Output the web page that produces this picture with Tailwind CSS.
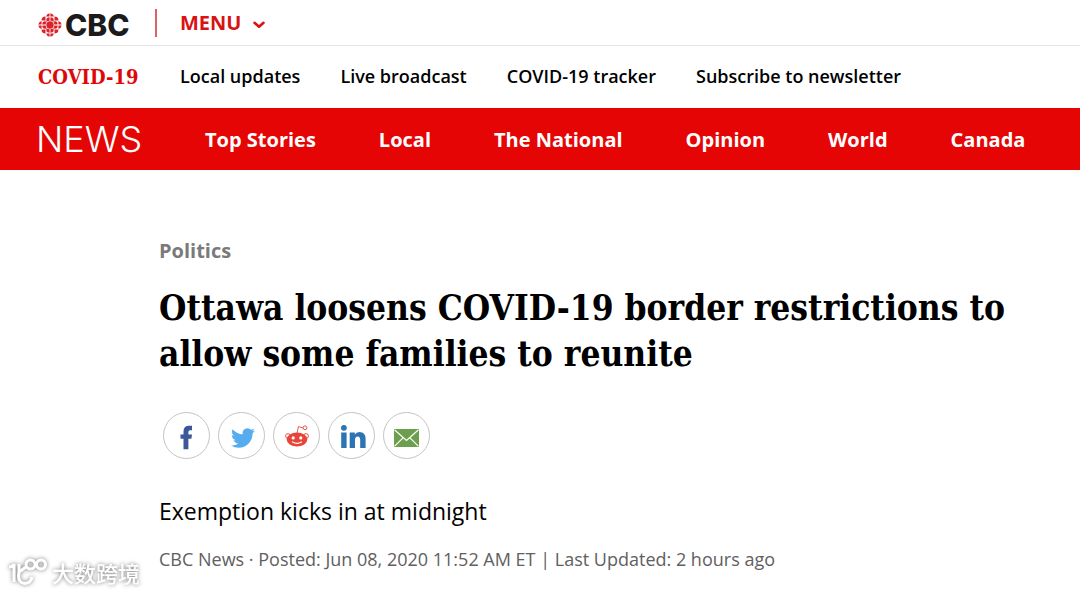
<!DOCTYPE html>
<html lang="en">
<head>
<meta charset="utf-8">
<meta name="viewport" content="width=device-width, initial-scale=1">
<title>Ottawa loosens COVID-19 border restrictions | CBC News</title>
<script src="https://cdn.jsdelivr.net/npm/@tailwindcss/browser@4"></script>
</head>
<body class="relative min-h-screen overflow-x-hidden bg-white font-['Open_Sans','Noto_Sans',sans-serif] text-black">
<header>
  <div class="flex h-[46px] items-center border-b border-[#e6e6e6] pl-[38px]">
    <a href="#" class="flex w-[117px] items-center gap-[3px] pt-1" aria-label="CBC home">
      <svg class="size-6 shrink-0" viewBox="0 0 24 24" fill="#d8232a" aria-hidden="true">
        <circle cx="12" cy="12" r="3.7"/>
        <path d="M8.3 7Q8.3 4.3 11.6 4.3V7.7Q9.8 7.8 8.6 8.8ZM15.7 7Q15.7 4.3 12.4 4.3V7.7Q14.2 7.8 15.4 8.8Z"/>
        <path d="M8.3 17Q8.3 19.7 11.6 19.7V16.3Q9.8 16.2 8.6 15.2ZM15.7 17Q15.7 19.7 12.4 19.7V16.3Q14.2 16.2 15.4 15.2Z"/>
        <path d="M7 8.3Q4.3 8.3 4.3 11.6H7.7Q7.8 9.8 8.8 8.6ZM17 8.3Q19.7 8.3 19.7 11.6H16.3Q16.2 9.8 15.2 8.6Z"/>
        <path d="M7 15.7Q4.3 15.7 4.3 12.4H7.7Q7.8 14.2 8.8 15.4ZM17 15.7Q19.7 15.7 19.7 12.4H16.3Q16.2 14.2 15.2 15.4Z"/>
        <path d="M11.6.3V3.6H8Q8.8.8 11.6.3ZM12.4.3V3.6H16Q15.2.8 12.4.3ZM11.6 23.7V20.4H8Q8.8 23.2 11.6 23.7ZM12.4 23.7V20.4H16Q15.2 23.2 12.4 23.7Z"/>
        <path d="M.3 11.6H3.6V8Q.8 8.8.3 11.6ZM.3 12.4H3.6V16Q.8 15.2.3 12.4ZM23.7 11.6H20.4V8Q23.2 8.8 23.7 11.6ZM23.7 12.4H20.4V16Q23.2 15.2 23.7 12.4Z"/>
        <path d="M3.5 7.5Q3.5 3.5 7.5 3.5V7.5ZM20.5 7.5Q20.5 3.5 16.5 3.5V7.5ZM3.5 16.5Q3.5 20.5 7.5 20.5V16.5ZM20.5 16.5Q20.5 20.5 16.5 20.5V16.5Z"/>
      </svg>
      <span class="font-[Inter,sans-serif] text-[30px] leading-8 font-extrabold text-[#1c1a1b]">CBC</span>
    </a>
    <button type="button" class="flex h-7 items-center gap-3 border-l-2 border-[#d96466] pl-[23px] text-xl font-bold text-[#d91313]">
      MENU
      <svg class="mt-1 h-2 w-3" viewBox="0 0 12 8" fill="none" stroke="currentColor" stroke-width="2.6" stroke-linecap="round" stroke-linejoin="round" aria-hidden="true"><path d="M1.5 1.8L6 5.8L10.5 1.8"/></svg>
    </button>
  </div>
  <nav class="flex h-[62px] items-center pl-[38px]" aria-label="COVID-19">
    <a href="#" class="w-[142px] font-['DejaVu_Serif_Condensed','DejaVu_Serif',serif] text-xl font-bold text-[#df0808]">COVID-19</a>
    <div class="flex gap-10 pb-0.5 text-lg font-semibold whitespace-nowrap">
      <a href="#">Local updates</a>
      <a href="#">Live broadcast</a>
      <a href="#">COVID-19 tracker</a>
      <a href="#">Subscribe to newsletter</a>
    </div>
  </nav>
  <nav class="flex h-[62px] items-center bg-[#e60505] pl-9 text-white" aria-label="News">
    <a href="#" class="w-[169px] font-[Inter,sans-serif] text-4xl font-light">NEWS</a>
    <div class="flex gap-[63px] pt-px text-xl font-bold whitespace-nowrap">
      <a href="#">Top Stories</a>
      <a href="#">Local</a>
      <a href="#">The National</a>
      <a href="#">Opinion</a>
      <a href="#">World</a>
      <a href="#">Canada</a>
    </div>
  </nav>
</header>
<main class="pt-[67px] pr-12 pl-[159px]">
  <a href="#" class="block text-xl leading-7 font-bold text-[#7a7a7a]">Politics</a>
  <h1 class="mt-5 font-['DejaVu_Serif_Condensed','DejaVu_Serif',serif] text-[35px] leading-[46px] font-bold">Ottawa loosens COVID-19 border restrictions to<br>allow some families to reunite</h1>
  <div class="mt-[35px] ml-1 flex gap-2">
    <a href="#" aria-label="Share on Facebook" class="flex size-[47px] items-center justify-center rounded-full border border-[#c4c4c4]">
      <svg class="size-7" viewBox="0 0 28 28" fill="#3b5998" aria-hidden="true"><path d="M10.5 27.3V16.8H7.5V12.4H10.5V9.4Q10.5 3.7 16 3.7H19V8.2H17.2Q15.4 8.2 15.4 10V12.4H19L18.4 16.8H15.4V27.3Z"/></svg>
    </a>
    <a href="#" aria-label="Share on Twitter" class="flex size-[47px] items-center justify-center rounded-full border border-[#c4c4c4]">
      <svg class="mt-1 ml-0.5 size-6" viewBox="0 0 24 24" fill="#55acee" aria-hidden="true"><path d="M23.95 4.57a10 10 0 0 1-2.82.77 4.96 4.96 0 0 0 2.16-2.72c-.95.55-2 .95-3.13 1.18a4.92 4.92 0 0 0-8.38 4.48C7.69 8.1 4.07 6.13 1.64 3.16a4.82 4.82 0 0 0-.67 2.48c0 1.71.87 3.21 2.19 4.1a4.9 4.9 0 0 1-2.23-.62v.06a4.92 4.92 0 0 0 3.95 4.83 5 5 0 0 1-2.21.08 4.94 4.94 0 0 0 4.6 3.42A9.87 9.87 0 0 1 0 19.54a13.99 13.99 0 0 0 7.56 2.21c9.05 0 14-7.5 14-13.98 0-.21 0-.42-.02-.63a9.94 9.94 0 0 0 2.46-2.55z"/></svg>
    </a>
    <a href="#" aria-label="Share on Reddit" class="flex size-[47px] items-center justify-center rounded-full border border-[#c4c4c4]">
      <svg class="size-7" viewBox="0 0 28 28" aria-hidden="true">
        <g fill="none" stroke="#e8453a" stroke-width=".9"><path d="M14 11L15.5 4.5L20 6"/><circle cx="22" cy="5.8" r="1.9"/><circle cx="5" cy="14" r="2.4"/><circle cx="23" cy="14" r="2.4"/></g>
        <ellipse cx="14" cy="17.5" rx="10.3" ry="7" fill="#e8453a"/>
        <circle cx="10.2" cy="15.9" r="1.6" fill="#fff"/><circle cx="17.8" cy="15.9" r="1.6" fill="#fff"/>
        <path d="M9.5 20Q14 22.6 18.5 20" fill="none" stroke="#fff" stroke-width="1.2" stroke-linecap="round"/>
      </svg>
    </a>
    <a href="#" aria-label="Share on LinkedIn" class="flex size-[47px] items-center justify-center rounded-full border border-[#c4c4c4]">
      <svg class="mt-0.5 ml-0.5 size-7" viewBox="0 0 28 28" fill="#2c74b3" aria-hidden="true"><circle cx="4.9" cy="4.8" r="2.9"/><path d="M2.2 9.5H7.6V25H2.2ZM10.7 9.5H15.8V11.6Q17.4 9.1 20.4 9.1Q26.6 9.1 26.6 16V25H21.2V17.1Q21.2 13.6 18.8 13.6Q16 13.6 16 17.2V25H10.7Z"/></svg>
    </a>
    <a href="#" aria-label="Share by email" class="flex size-[47px] items-center justify-center rounded-full border border-[#c4c4c4]">
      <svg class="mt-1 h-[18px] w-[25px]" viewBox="0 0 25 18" aria-hidden="true"><rect width="25" height="18" rx="1" fill="#6b9f4d"/><path d="M.7 1L12.5 11.5L24.3 1M.7 17.2L9 8.8M24.3 17.2L16 8.8" fill="none" stroke="#fff" stroke-width="1.2"/></svg>
    </a>
  </div>
  <p class="mt-9 text-[23px] leading-8">Exemption kicks in at midnight</p>
  <p class="mt-5 text-lg leading-6 text-[#606060]">CBC News · Posted: Jun 08, 2020 11:52 AM ET | Last Updated: 2 hours ago</p>
</main>
<div class="absolute bottom-1.5 left-2 flex items-center gap-1 text-white drop-shadow-[0_0_2px_#777777]">
  <svg class="h-7 w-10" viewBox="0 0 40 28" fill="none" stroke="currentColor" stroke-width="3" aria-hidden="true"><path d="M1 9Q5 9 6 6V24M18 9L11 14V6M11 14Q9 25 17 25.500Q23 25 24 19"/><circle cx="22.500" cy="6.500" r="4.500"/><circle cx="33" cy="6.500" r="4.500"/></svg>
  <span lang="zh-CN" class="font-['Noto_Sans_CJK_SC',sans-serif] text-[22px] leading-6 font-medium">大数跨境</span>
</div>
</body>
</html>
